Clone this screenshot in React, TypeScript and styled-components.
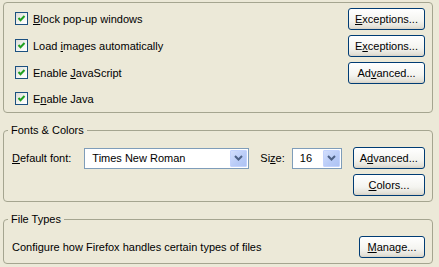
import styled, { createGlobalStyle } from 'styled-components';
import type { ReactNode } from 'react';

const GlobalStyle = createGlobalStyle`
  html, body {
    margin: 0;
    padding: 0;
    background: #ece9d8;
  }
  body {
    font-family: "Liberation Sans", Arial, sans-serif;
    font-size: 11px;
    color: #000;
  }
`;

type CheckRow = { label: ReactNode; button?: ReactNode };

const content_rows: CheckRow[] = [
  { label: <><u>B</u>lock pop-up windows</>, button: <><u>E</u>xceptions...</> },
  { label: <>Load <u>i</u>mages automatically</>, button: <>E<u>x</u>ceptions...</> },
  { label: <>Enable <u>J</u>avaScript</>, button: <>Ad<u>v</u>anced...</> },
  { label: <>E<u>n</u>able Java</> },
];

function CheckBox() {
  return (
    <StyledCheck>
      <svg width="11" height="11" viewBox="0 0 11 11">
        <polyline points="2.5,5 4.5,7.2 8.5,3" fill="none" stroke="#21a121" strokeWidth="2" />
      </svg>
    </StyledCheck>
  );
}

function Combo({ value, width }: { value: string; width: number }) {
  return (
    <StyledCombo $width={width}>
      <span>{value}</span>
      <DropButton>
        <svg width="9" height="6" viewBox="0 0 9 6">
          <polyline points="1,1 4.5,4.5 8,1" fill="none" stroke="#4d6185" strokeWidth="2" />
        </svg>
      </DropButton>
    </StyledCombo>
  );
}

export default function App() {
  return (
    <Page>
      <GlobalStyle />
      <TopGroup>
        {content_rows.map((row, idx) => (
          <Row key={idx} $last={idx === content_rows.length - 1}>
            <CheckLabel>
              <CheckBox />
              <span>{row.label}</span>
            </CheckLabel>
            {row.button && <Button $width={77}>{row.button}</Button>}
          </Row>
        ))}
      </TopGroup>

      <Group>
        <Legend>Fonts &amp; Colors</Legend>
        <GroupBody $top={10} $bottom={5}>
          <FontRow>
            <FieldLabel $right={13}>
              <u>D</u>efault font:
            </FieldLabel>
            <Combo value="Times New Roman" width={165} />
            <FieldLabel $right={7}>
              Si<u>z</u>e:
            </FieldLabel>
            <Combo value="16" width={50} />
            <Button $width={72}>
              A<u>d</u>vanced...
            </Button>
          </FontRow>
          <ButtonRow>
            <Button $width={72}>
              <u>C</u>olors...
            </Button>
          </ButtonRow>
        </GroupBody>
      </Group>

      <Group>
        <Legend>File Types</Legend>
        <GroupBody $top={8} $bottom={4}>
          <Row $last>
            <span>Configure how Firefox handles certain types of files</span>
            <Button $width={66}>
              <u>M</u>anage...
            </Button>
          </Row>
        </GroupBody>
      </Group>
    </Page>
  );
}

const Page = styled.div`
  width: 439px;
  height: 267px;
  overflow: hidden;
  box-sizing: border-box;
  padding: 2px 6px 0 3px;
  display: flex;
  flex-direction: column;
`;

const TopGroup = styled.div`
  border: 1px solid #a5a590;
  border-radius: 4px;
  padding: 2px 7px 1px 11px;
`;

const Row = styled.div<{ $last?: boolean }>`
  display: flex;
  align-items: center;
  justify-content: space-between;
  height: ${p => (p.$last ? '25px' : '27px')};
  white-space: nowrap;
`;

const CheckLabel = styled.label`
  display: flex;
  align-items: center;
  gap: 5px;
`;

const StyledCheck = styled.span`
  display: flex;
  align-items: center;
  justify-content: center;
  width: 13px;
  height: 13px;
  box-sizing: border-box;
  border: 1px solid #1c5180;
  background: linear-gradient(135deg, #dcdcd7 0%, #f6f6f4 60%, #ffffff 100%);
`;

const Button = styled.button<{ $width: number }>`
  flex-shrink: 0;
  width: ${p => p.$width}px;
  height: 22px;
  box-sizing: border-box;
  padding: 0;
  border: 1px solid #003c74;
  border-radius: 3px;
  background: linear-gradient(180deg, #ffffff 0%, #f4f4f0 60%, #e3e1d8 90%, #d6d0c5 100%);
  font: inherit;
  color: #000;
  text-align: center;
  white-space: nowrap;
`;

const Group = styled.fieldset`
  margin: 11px 0 0;
  padding: 0;
  border: 1px solid #a5a590;
  border-radius: 4px;
  min-width: 0;
`;

const Legend = styled.legend`
  margin-left: 4px;
  padding: 0 3px;
  line-height: 13px;
`;

const GroupBody = styled.div<{ $top: number; $bottom: number }>`
  padding: ${p => p.$top}px 7px ${p => p.$bottom}px 8px;
`;

const FontRow = styled.div`
  display: flex;
  align-items: center;
  height: 22px;
`;

const FieldLabel = styled.span<{ $right: number }>`
  flex-shrink: 0;
  white-space: nowrap;
  margin-right: ${p => p.$right}px;
`;

const ButtonRow = styled.div`
  display: flex;
  justify-content: flex-end;
  margin-top: 5px;
`;

const StyledCombo = styled.div<{ $width: number }>`
  flex-shrink: 0;
  display: flex;
  align-items: stretch;
  width: ${p => p.$width}px;
  height: 21px;
  box-sizing: border-box;
  border: 1px solid #7f9db9;
  background: #fff;
  margin-right: 11px;

  span {
    flex: 1;
    display: flex;
    align-items: center;
    padding-left: 7px;
    white-space: nowrap;
  }
`;

const DropButton = styled.div`
  display: flex;
  align-items: center;
  justify-content: center;
  width: 15px;
  margin: 1px;
  border: 1px solid #c3d3fd;
  border-radius: 1px;
  background: linear-gradient(135deg, #d2defc 0%, #b8cbf7 60%, #aec3f3 100%);
`;
